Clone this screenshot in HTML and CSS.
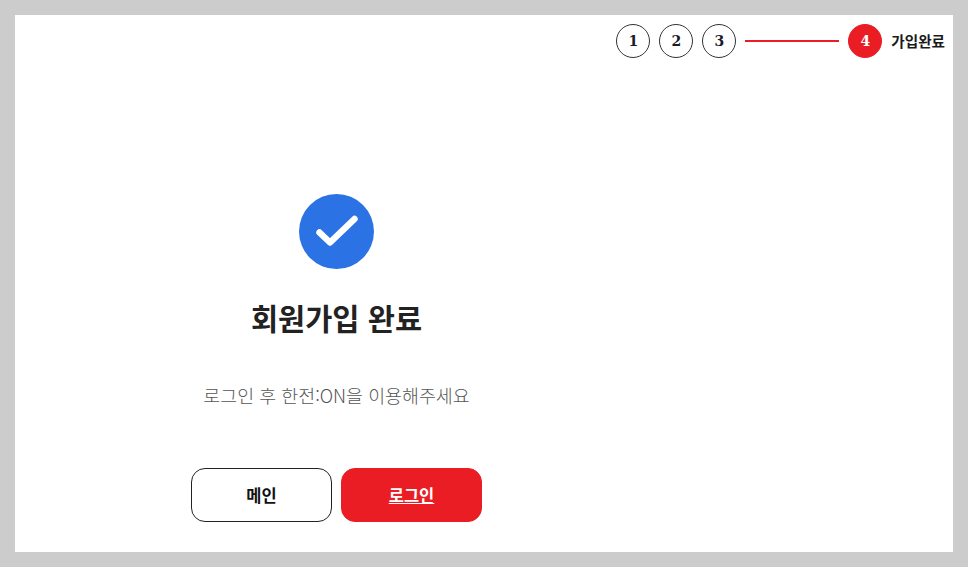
FILE: index.html
```html
<!DOCTYPE html>
<html lang="ko">
<head>
    <meta charset="UTF-8">
    <meta name="viewport" content="width=device-width, initial-scale=1.0">
    <title>회원가입 완료</title>
    <link rel="stylesheet" href="styles.css">
</head>
<body>
    <div class="card">
        <div class="steps">
            <div class="step">1</div>
            <div class="step">2</div>
            <div class="step">3</div>
            <div class="step-line"></div>
            <div class="step active">4</div>
            <div class="step-label">가입완료</div>
        </div>
        <div class="complete">
            <svg class="check" viewBox="0 0 75 75">
                <circle cx="37.5" cy="37.5" r="37.5" fill="#2b72e4"/>
                <path d="M20.5 38.5 L31 48.5 L55.5 25" fill="none" stroke="#fff" stroke-width="6.5" stroke-linecap="round" stroke-linejoin="round"/>
            </svg>
            <h1>회원가입 완료</h1>
            <p>로그인 후 한전:ON을 이용해주세요</p>
            <div class="buttons">
                <a class="btn">메인</a>
                <a class="btn primary">로그인</a>
            </div>
        </div>
    </div>
</body>
</html>
```

FILE: styles.css
```css
body{
    margin: 0;
    height: 567px;
    padding: 15px;
    box-sizing: border-box;
    background-color: #cccccc;
    font-family: "Noto Sans CJK KR", "Noto Sans", sans-serif;
    overflow: hidden;
}
.card{
    width: 938px;
    height: 537px;
    padding-top: 9px;
    box-sizing: border-box;
    background-color: #ffffff;
}
.steps{
    display: flex;
    justify-content: flex-end;
    align-items: center;
    gap: 9px;
    padding-right: 8px;
}
.step{
    display: flex;
    justify-content: center;
    align-items: center;
    width: 34px;
    height: 34px;
    box-sizing: border-box;
    border: 1px solid #333333;
    border-radius: 50%;
    font-family: "DejaVu Serif", serif;
    font-size: 14px;
    font-weight: 700;
    color: #1a1a2a;
}
.step.active{
    border-color: #ea1d24;
    background-color: #ea1d24;
    color: #ffffff;
}
.step-line{
    width: 94px;
    height: 2px;
    background-color: #ea1d24;
}
.step-label{
    padding-bottom: 2px;
    font-size: 14.6px;
    font-weight: 700;
    color: #1a1a1a;
}
.complete{
    display: flex;
    flex-direction: column;
    align-items: center;
    width: 291px;
    margin: 136px 0 0 176px;
}
.check{
    display: block;
    width: 75px;
    height: 75px;
}
h1{
    margin: 25px 0 0;
    font-size: 29.5px;
    line-height: 46px;
    font-weight: 700;
    color: #222222;
}
p{
    margin: 41px 0 0;
    font-size: 18.4px;
    line-height: 28px;
    font-weight: 300;
    color: #555555;
}
.buttons{
    display: flex;
    gap: 9px;
    margin-top: 59px;
}
.btn{
    display: flex;
    justify-content: center;
    align-items: center;
    width: 141px;
    height: 54px;
    box-sizing: border-box;
    border: 1px solid #222222;
    border-radius: 14px;
    font-size: 16.5px;
    font-weight: 700;
    color: #111111;
}
.btn.primary{
    border-color: #ea1d24;
    background-color: #ea1d24;
    color: #ffffff;
    text-decoration: underline;
}
```
